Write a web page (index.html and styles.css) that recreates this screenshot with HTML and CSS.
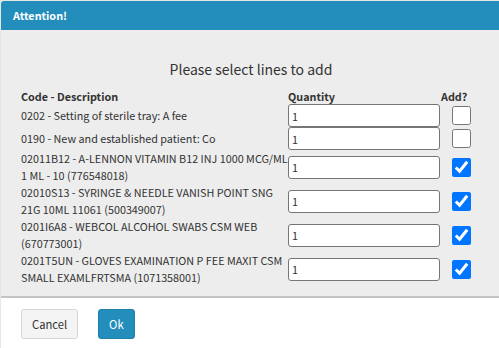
FILE: index.html
```html
<!DOCTYPE html>
<html lang="en">
<head>
  <meta charset="UTF-8" />
  <meta name="viewport" content="width=device-width, initial-scale=1.0" />
  <title>Attention!</title>
  <link rel="stylesheet" href="styles.css">
</head>
<body>

  <div class="backdrop">
    <div class="modal">
      <div class="modal-header">Attention!</div>

      <div class="modal-body">
        <h4 class="prompt">Please select lines to add</h4>
        <table class="lines">
          <thead>
            <tr>
              <th class="col-desc">Code - Description</th>
              <th class="col-qty">Quantity</th>
              <th class="col-add">Add?</th>
            </tr>
          </thead>
          <tbody>
            <tr>
              <td>0202 - Setting of sterile tray: A fee</td>
              <td><input type="text" class="qty" value="1" /></td>
              <td class="col-add"><input type="checkbox" class="pick" /></td>
            </tr>
            <tr>
              <td>0190 - New and established patient: Co</td>
              <td><input type="text" class="qty" value="1" /></td>
              <td class="col-add"><input type="checkbox" class="pick" /></td>
            </tr>
            <tr>
              <td>02011B12 - A-LENNON VITAMIN B12 INJ 1000 MCG/ML 1 ML - 10 (776548018)</td>
              <td><input type="text" class="qty" value="1" /></td>
              <td class="col-add"><input type="checkbox" class="pick" checked /></td>
            </tr>
            <tr>
              <td>02010S13 - SYRINGE &amp; NEEDLE VANISH POINT SNG 21G 10ML 11061 (500349007)</td>
              <td><input type="text" class="qty" value="1" /></td>
              <td class="col-add"><input type="checkbox" class="pick" checked /></td>
            </tr>
            <tr>
              <td>0201I6A8 - WEBCOL ALCOHOL SWABS CSM WEB (670773001)</td>
              <td><input type="text" class="qty" value="1" /></td>
              <td class="col-add"><input type="checkbox" class="pick" checked /></td>
            </tr>
            <tr>
              <td>0201T5UN - GLOVES EXAMINATION P FEE MAXIT CSM SMALL EXAMLFRTSMA (1071358001)</td>
              <td><input type="text" class="qty" value="1" /></td>
              <td class="col-add"><input type="checkbox" class="pick" checked /></td>
            </tr>
          </tbody>
        </table>
      </div>

      <div class="modal-footer">
        <button type="button" class="btn btn-default">Cancel</button>
        <button type="button" class="btn btn-primary">Ok</button>
      </div>
    </div>
  </div>

</body>
</html>
```

FILE: styles.css
```css
body {
  margin: 0;
  overflow: hidden;
  background-color: #e6e6e6;
  font-family: "Noto Sans CJK SC", Lato, sans-serif;
  font-size: 10.8px;
  color: #333;
}

.backdrop {
  padding: 1px 0 0 1px;
}

.modal {
  width: 500px;
  background: #fff;
  border-radius: 3px 0 0 0;
  overflow: hidden;
}

.modal-header {
  height: 29px;
  line-height: 29px;
  padding-left: 12px;
  background-color: #238dbb;
  color: #fff;
  font-weight: bold;
}

.modal-body {
  background-color: #ededed;
  padding: 28px 20px 10px 20px;
  border-bottom: 2px solid #c4c4c4;
}

.prompt {
  margin: 0 0 8px 0;
  line-height: 22px;
  font-size: 14px;
  font-weight: normal;
  text-align: center;
}

.lines {
  width: 461px;
  border-collapse: collapse;
  border-spacing: 0;
}

.lines th {
  text-align: left;
  line-height: 16px;
  padding: 0;
  font-weight: bold;
}

.lines td {
  padding: 0;
  line-height: 17px;
  vertical-align: middle;
}

.col-desc {
  width: 267px;
}

.col-qty {
  width: 153px;
}

.lines td.col-add {
  text-align: center;
}

.qty {
  box-sizing: border-box;
  width: 152px;
  height: 23px;
  margin: 0;
  padding: 0 3px;
  border: 1px solid #767676;
  border-radius: 3px;
  font-family: inherit;
  font-size: 10.8px;
  color: #333;
  vertical-align: middle;
}

.pick {
  width: 19px;
  height: 19px;
  margin: 0;
  vertical-align: middle;
}

.modal-footer {
  padding: 11px 20px 9px 20px;
  display: flex;
  gap: 20px;
}

.btn {
  height: 30px;
  padding: 0 10px;
  border-radius: 3px;
  font-family: inherit;
  font-size: 11.2px;
  cursor: pointer;
}

.btn-default {
  background-color: #f4f4f4;
  border: 1px solid #d6d6d6;
  color: #333;
}

.btn-primary {
  background-color: #238dbb;
  border: 1px solid #1f80aa;
  color: #fff;
}
```
